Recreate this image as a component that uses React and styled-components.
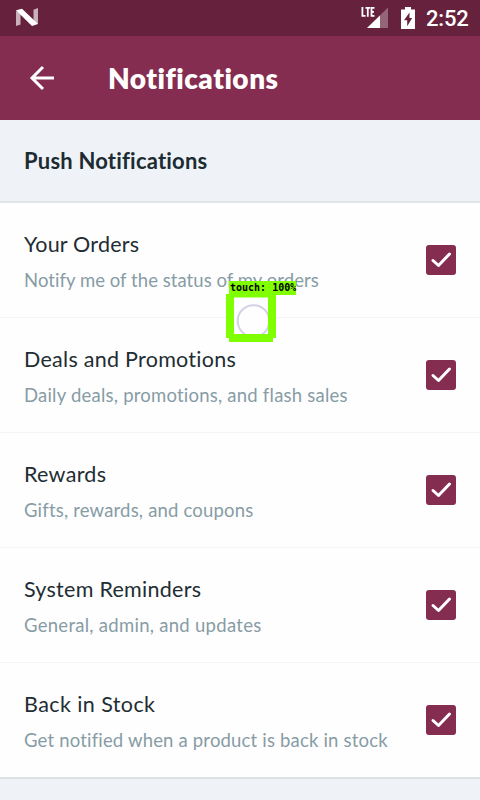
import React from 'react';
import styled, { createGlobalStyle } from 'styled-components';

const GlobalStyle = createGlobalStyle`
  * { box-sizing: border-box; }
  body { margin: 0; background: #eff3f7; }
`;

const Screen = styled.main`
  position: relative;
  width: 480px;
  height: 800px;
  overflow: hidden;
  display: flex;
  flex-direction: column;
  background: #eff3f7;
  font-family: Lato, sans-serif;
  font-variant-ligatures: none;
`;

const StatusBar = styled.div`
  height: 36px;
  flex: none;
  display: flex;
  align-items: center;
  padding: 0 12px 0 16px;
  background: #66213d;
`;

const StatusIcons = styled.div`
  display: flex;
  align-items: center;
  margin-left: auto;
`;

const Clock = styled.span`
  width: 42px;
  margin-left: 11px;
  padding-top: 2px;
  font: 500 22px/36px Roboto, sans-serif;
  letter-spacing: -0.2px;
  white-space: nowrap;
  color: #fff;
`;

const AppBar = styled.header`
  height: 84px;
  flex: none;
  display: flex;
  align-items: center;
  gap: 52px;
  padding-left: 28px;
  background: #852d50;
`;

const BackButton = styled.button`
  width: 28px;
  height: 28px;
  padding: 0;
  border: 0;
  background: none;
  display: flex;
`;

const Title = styled.h1`
  margin: 0;
  font-size: 28px;
  line-height: 36px;
  font-weight: 800;
  letter-spacing: ${(p) => p.$track}px;
  white-space: nowrap;
  color: #fff;
`;

const SectionHeader = styled.div`
  height: 83px;
  flex: none;
  display: flex;
  align-items: center;
  padding-left: 24px;
  background: #eff3f7;
  border-bottom: 2px solid #e2e3e9;
`;

const SectionTitle = styled.h2`
  margin: 0;
  font-size: 22px;
  line-height: 28px;
  font-weight: 700;
  letter-spacing: ${(p) => p.$track}px;
  white-space: nowrap;
  color: #1d2b32;
`;

const List = styled.div`
  flex: none;
  height: 576px;
  background: #fefefe;
  border-bottom: 2px solid #dcdfe3;
`;

const Row = styled.div`
  height: 115px;
  display: flex;
  align-items: center;
  justify-content: space-between;
  padding: 0 24px;
  border-bottom: 1px solid ${(p) => (p.$last ? 'transparent' : '#f2f4f6')};
`;

const Labels = styled.div`
  display: flex;
  flex-direction: column;
  gap: 8px;
  padding-top: 4px;
`;

const Name = styled.span`
  align-self: flex-start;
  font-size: 21.5px;
  line-height: 28px;
  letter-spacing: ${(p) => p.$track}px;
  white-space: nowrap;
  color: #222d33;
`;

const Detail = styled(Name)`
  font-size: 18.5px;
  color: #879ca5;
`;

const CheckBox = styled.div`
  width: 30px;
  height: 30px;
  border-radius: 3px;
  display: flex;
  background: #852d50;
`;

const TouchMarker = styled.div`
  position: absolute;
  left: 226px;
  top: 281px;
  width: 70px;
  height: 61px;
`;

const TouchLabel = styled.span`
  position: absolute;
  left: 3px;
  top: 0;
  width: 67px;
  height: 14px;
  padding-left: 1px;
  font: 700 10px/14px "DejaVu Sans Mono", monospace;
  white-space: pre;
  color: #000;
  background: #80ff00;
`;

const rows = [
  { name: 'Your Orders', detail: 'Notify me of the status of my orders', nt: 0.2, dt: 0.05 },
  { name: 'Deals and Promotions', detail: 'Daily deals, promotions, and flash sales', nt: 0.27, dt: 0.22 },
  { name: 'Rewards', detail: 'Gifts, rewards, and coupons', nt: 0.3, dt: 0.18 },
  { name: 'System Reminders', detail: 'General, admin, and updates', nt: 0.27, dt: 0.28 },
  { name: 'Back in Stock', detail: 'Get notified when a product is back in stock', nt: 0.42, dt: 0.18 },
];

const Nougat = () => (
  <svg width="23" height="20" viewBox="0 0 23 20">
    <path d="M0 3 4.500 5V16.500L0 18zM17.500 1.800 22 0V16L17.500 14z" fill="#fff" opacity=".65" />
    <path d="M0 2.200 6 .8 22 16 16 18z" fill="#fff" />
  </svg>
);

const Signal = () => (
  <svg width="28" height="24" viewBox="0 0 28 24">
    <path d="M27 1.500V22H6z" fill="#fff" opacity=".3" />
    <path d="M19 9.500V22H6z" fill="#fff" />
    <path d="M0 0H14V12H0z" fill="#66213d" />
    <g fill="none" stroke="#fff" strokeWidth="1.800">
      <path d="M1.400 1V9.900H4.500M4.500 1.900H9.200M6.800 1.900V10.800M13.500 1.900H10.500V9.900H13.500M10.500 5.900H13" />
    </g>
  </svg>
);

const Battery = () => (
  <svg width="14" height="22" viewBox="0 0 14 22">
    <path fillRule="evenodd" d="M4 0h6v2.500h4V22H0V2.500h4zM8.500 5.500 3 13.300h3.200v6l5-8.300H8.500z" fill="#fff" />
  </svg>
);

export default function App() {
  return (
    <Screen>
      <GlobalStyle />
      <StatusBar>
        <Nougat />
        <StatusIcons>
          <Signal />
          <svg width="12" height="1" />
          <Battery />
          <Clock>2:52</Clock>
        </StatusIcons>
      </StatusBar>
      <AppBar>
        <BackButton aria-label="Back">
          <svg width="28" height="28" viewBox="0 0 28 28" fill="none" stroke="#fff" strokeWidth="3">
            <path d="M26 14H4M15 3 4 14l11 11" />
          </svg>
        </BackButton>
        <Title $track={0.5}>Notifications</Title>
      </AppBar>
      <SectionHeader>
        <SectionTitle $track={0.2}>Push Notifications</SectionTitle>
      </SectionHeader>
      <List>
        {rows.map((r, i) => (
          <Row key={r.name} $last={i === rows.length - 1}>
            <Labels>
              <Name $track={r.nt}>{r.name}</Name>
              <Detail $track={r.dt}>{r.detail}</Detail>
            </Labels>
            <CheckBox role="checkbox" aria-checked="true" aria-label={r.name}>
              <svg width="30" height="30" viewBox="0 0 30 30" fill="none" stroke="#fff" strokeWidth="3" strokeLinecap="round" strokeLinejoin="round">
                <path d="m7 15.500 5.500 5L23.500 9" />
              </svg>
            </CheckBox>
          </Row>
        ))}
      </List>
      <TouchMarker>
        <svg width="70" height="61" viewBox="0 0 70 61">
          <path d="M8 16H42V53H8z" fill="#fefefe" />
          <circle cx="27.500" cy="40" r="15.800" fill="none" stroke="#d3d2e4" strokeWidth="2" />
          <path fillRule="evenodd" d="M0 13H50V57H47V61H3V57H0zM8 16.500V53H42V16.500z" fill="#80ff00" />
        </svg>
        <TouchLabel>touch: 100%</TouchLabel>
      </TouchMarker>
    </Screen>
  );
}
